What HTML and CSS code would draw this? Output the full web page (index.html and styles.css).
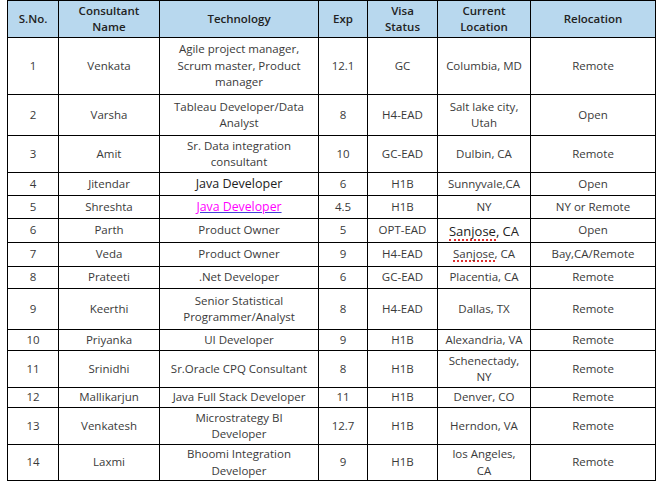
FILE: index.html
```html
<!DOCTYPE html>
<html>
<head>
<meta charset="utf-8">
<link rel="stylesheet" href="styles.css">
</head>
<body>
<table class="grid">
<colgroup>
<col class="c1"><col class="c2"><col class="c3"><col class="c4"><col class="c5"><col class="c6"><col class="c7">
</colgroup>
<thead>
<tr class="h37 head">
<th>S.No.</th><th>Consultant<br>Name</th><th>Technology</th><th>Exp</th><th>Visa<br>Status</th><th>Current<br>Location</th><th>Relocation</th>
</tr>
</thead>
<tbody>
<tr class="h57"><td>1</td><td>Venkata</td><td>Agile project manager,<br>Scrum master, Product<br>manager</td><td>12.1</td><td>GC</td><td>Columbia, MD</td><td>Remote</td></tr>
<tr class="h41"><td>2</td><td>Varsha</td><td>Tableau Developer/Data<br>Analyst</td><td>8</td><td>H4-EAD</td><td>Salt lake city,<br>Utah</td><td>Open</td></tr>
<tr class="h37"><td>3</td><td>Amit</td><td>Sr. Data integration<br>consultant</td><td>10</td><td>GC-EAD</td><td>Dulbin, CA</td><td>Remote</td></tr>
<tr class="h23"><td>4</td><td>Jitendar</td><td class="big">Java Developer</td><td>6</td><td>H1B</td><td>Sunnyvale,CA</td><td>Open</td></tr>
<tr class="h23"><td>5</td><td>Shreshta</td><td><a class="link" href="#">Java Developer</a></td><td>4.5</td><td>H1B</td><td>NY</td><td>NY or Remote</td></tr>
<tr class="h24"><td>6</td><td>Parth</td><td>Product Owner</td><td>5</td><td>OPT-EAD</td><td class="mid low"><span class="spell">Sanjose</span>, CA</td><td>Open</td></tr>
<tr class="h24"><td>7</td><td>Veda</td><td>Product Owner</td><td>9</td><td>H4-EAD</td><td><span class="spell">Sanjose</span>, CA</td><td>Bay,CA/Remote</td></tr>
<tr class="h22"><td>8</td><td>Prateeti</td><td>.Net Developer</td><td>6</td><td>GC-EAD</td><td>Placentia, CA</td><td>Remote</td></tr>
<tr class="h41"><td>9</td><td>Keerthi</td><td>Senior Statistical<br>Programmer/Analyst</td><td>8</td><td>H4-EAD</td><td>Dallas, TX</td><td>Remote</td></tr>
<tr class="h21"><td>10</td><td>Priyanka</td><td>UI Developer</td><td>9</td><td>H1B</td><td>Alexandria, VA</td><td>Remote</td></tr>
<tr class="h37"><td>11</td><td>Srinidhi</td><td>Sr.Oracle CPQ Consultant</td><td>8</td><td>H1B</td><td>Schenectady,<br>NY</td><td>Remote</td></tr>
<tr class="h20"><td>12</td><td>Mallikarjun</td><td>Java Full Stack Developer</td><td>11</td><td>H1B</td><td>Denver, CO</td><td>Remote</td></tr>
<tr class="h37"><td>13</td><td>Venkatesh</td><td>Microstrategy BI<br>Developer</td><td>12.7</td><td>H1B</td><td>Herndon, VA</td><td>Remote</td></tr>
<tr class="h36"><td>14</td><td>Laxmi</td><td>Bhoomi Integration<br>Developer</td><td>9</td><td>H1B</td><td>los Angeles,<br>CA</td><td>Remote</td></tr>
</tbody>
</table>
</body>
</html>
```

FILE: styles.css
```css
html, body {
  margin: 0;
  padding: 0;
  background: #ffffff;
}
body {
  padding-left: 7px;
  font-family: "Open Sans", "Noto Sans", sans-serif;
  font-size: 11.5px;
  color: #3a3a3a;
}
.grid {
  border-collapse: collapse;
  table-layout: fixed;
  width: 649px;
}
.c1 { width: 51px; }
.c2 { width: 101px; }
.c3 { width: 159px; }
.c4 { width: 49px; }
.c5 { width: 70px; }
.c6 { width: 93px; }
.c7 { width: 125px; }
.grid th, .grid td {
  border: 1px solid #000000;
  padding: 0;
  text-align: center;
  vertical-align: middle;
  line-height: 16.5px;
  white-space: nowrap;
  overflow: hidden;
}
.head th {
  background: #b8d8ee;
  color: #222222;
  font-weight: 600;
}
.h57 { height: 57px; }
.h41 { height: 41px; }
.h37 { height: 37px; }
.h36 { height: 36px; }
.h24 { height: 24px; }
.h23 { height: 23px; }
.h22 { height: 22px; }
.h21 { height: 21px; }
.h20 { height: 20px; }
.big {
  font-size: 12.5px;
  color: #222222;
}
.link {
  color: #ff00ff;
  text-decoration: underline;
  text-decoration-color: #3f3fd8;
  font-size: 12.3px;
}
.mid {
  font-size: 13px;
  color: #222222;
}
.grid td.low {
  padding-top: 3px;
}
.spell {
  display: inline-block;
  line-height: 1.15;
  border-bottom: 2px dotted #e03030;
}
```
